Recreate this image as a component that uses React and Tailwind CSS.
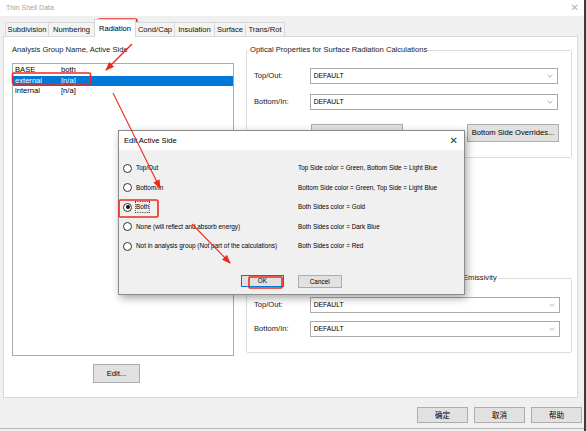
const reg = "font-['Liberation_Sans',Arial,sans-serif] text-[7.6px] leading-[10px]";
const narrow = "font-['Liberation_Sans',Arial,sans-serif] text-[7.5px] leading-[10px]";
const cjk = "font-['Noto_Sans_CJK_SC','Noto_Sans_CJK_JP',sans-serif] text-[7.5px] leading-[10px]";

const tabs = [
    { label: "Subdivision", w: "w-[44px]" },
    { label: "Numbering", w: "w-[47px]" },
    { label: "Radiation", w: "w-[42px]", active: true },
    { label: "Cond/Cap", w: "w-[40px]" },
    { label: "Insulation", w: "w-[41px]" },
    { label: "Surface", w: "w-[32px]" },
    { label: "Trans/Rot", w: "w-[40px]" },
];

const groups = [
    { name: "BASE", side: "both" },
    { name: "external", side: "[n/a]", selected: true },
    { name: "internal", side: "[n/a]" },
];

const options = [
    { label: "Top/Out", note: "Top Side color = Green, Bottom Side = Light Blue" },
    { label: "Bottom/In", note: "Bottom Side color = Green, Top Side = Light Blue" },
    { label: "Both", note: "Both Sides color = Gold", checked: true },
    { label: "None (will reflect and absorb energy)", note: "Both Sides color = Dark Blue" },
    { label: "Not in analysis group (Not part of the calculations)", note: "Both Sides color = Red" },
];

// dialog text is a squeezed system font, so scale it horizontally
function Narrow({ children, className = "", origin = "origin-left" }) {
    return (
        <span className={`inline-block whitespace-nowrap scale-x-[0.85] ${origin} ${narrow} ${className}`}>
            {children}
        </span>
    );
}

function Chevron() {
    return (
        <svg width="6" height="4" viewBox="0 0 6 4" className="mr-[4px]">
            <path d="M0.5 0.8 L3 3.2 L5.5 0.8" fill="none" stroke="#9a9a9a" strokeWidth="0.8" />
        </svg>
    );
}

function Combo({ label, width, mt }) {
    return (
        <div className={`flex items-center ${mt}`}>
            <span className={`${reg} w-[56px] text-[#1a1a1a]`}>{label}</span>
            <div className={`${width} h-[16px] bg-white border border-[#a9a9a9] flex items-center justify-between`}>
                <span className={`${narrow} pl-[3px] inline-block scale-x-[0.9] origin-left text-black`}>DEFAULT</span>
                <Chevron />
            </div>
        </div>
    );
}

function Radio({ checked }) {
    return (
        <span className="w-[9px] h-[9px] rounded-full border border-[#333] bg-white flex items-center justify-center shrink-0">
            {checked && <span className="w-[4px] h-[4px] rounded-full bg-[#111]" />}
        </span>
    );
}

export default function App() {
    return (
        <div className="w-[586px] h-[431px] flex bg-[#f0f0f0] relative overflow-hidden">
            <div className="w-[584px] h-[429px] flex flex-col border-b border-[#b5b5b5]">
                {/* title bar */}
                <div className="h-[16px] bg-white flex items-center justify-between px-[6px]">
                    <span className={`${reg} text-[7px] text-[#a3a3a3]`}>Thin Shell Data</span>
                    <span className="text-[10px] leading-none text-[#b0b0b0] font-['DejaVu_Sans',sans-serif] -mr-[1px]">✕</span>
                </div>

                {/* tabs */}
                <div className="mt-[3px] h-[17px] flex items-end pl-[5px] relative z-10">
                    {tabs.map(t => (
                        <div
                            key={t.label}
                            className={`${t.w} ${reg} flex items-center justify-center border border-b-0 -ml-px first:ml-0 ${t.active ? "h-[18px] -mb-px bg-white border-[#d4d4d4] text-black" : "h-[14px] bg-[#f3f3f3] border-[#d9d9d9] text-[#111]"}`}
                        >
                            {t.label}
                        </div>
                    ))}
                </div>

                {/* tab page */}
                <div className="mx-[3px] w-[575px] h-[362px] bg-white border border-[#d9d9d9] flex pt-[8px] pl-[8px]">
                    <div className="w-[222px] flex flex-col">
                        <div className={`${reg} text-[#1a1a1a]`}>Analysis Group Name, Active Side</div>
                        <div className="mt-[8px] h-[293px] border border-[#aaaaaa] bg-white pt-[1px]">
                            {groups.map(g => (
                                <div
                                    key={g.name}
                                    className={`h-[10.5px] flex items-center ${reg} ${g.selected ? "bg-[#0078d7] text-white" : "text-black"}`}
                                >
                                    <span className="w-[48px] pl-[2px]">{g.name}</span>
                                    <span>{g.side}</span>
                                </div>
                            ))}
                        </div>
                        <button className={`mt-[8px] ml-[81px] w-[47px] h-[19px] bg-[#e1e1e1] border border-[#adadad] ${reg} text-black`}>
                            Edit...
                        </button>
                    </div>

                    <div className="ml-[12px] w-[326px] flex flex-col">
                        <fieldset className="border border-[#dcdcdc] rounded-[2px] px-0 pb-[15px] m-0">
                            <legend className={`${reg} ml-[2px] px-[1px] text-[#1a1a1a]`}>
                                Optical Properties for Surface Radiation Calculations
                            </legend>
                            <div className="pl-[7px]">
                                <Combo label="Top/Out:" width="w-[248px]" mt="mt-[13px]" />
                                <Combo label="Bottom/In:" width="w-[248px]" mt="mt-[10px]" />
                                <div className="mt-[14px] ml-[57px] flex gap-[64px]">
                                    <button className={`w-[92px] h-[18px] bg-[#e1e1e1] border border-[#adadad] ${reg} text-black`}>
                                        Top Side Overrides...
                                    </button>
                                    <button className={`w-[92px] h-[18px] bg-[#e1e1e1] border border-[#adadad] ${reg} text-black`}>
                                        Bottom Side Overrides...
                                    </button>
                                </div>
                            </div>
                        </fieldset>

                        {/* legend start is hidden behind the modal */}
                        <fieldset className="mt-[115px] border border-[#dcdcdc] rounded-[2px] px-0 pb-[15px] m-0">
                            <legend className={`${reg} ml-[215px] px-[1px] text-[#1a1a1a]`}>
                                Emissivity
                            </legend>
                            <div className="pl-[7px]">
                                <Combo label="Top/Out:" width="w-[250px]" mt="mt-[14px]" />
                                <Combo label="Bottom/In:" width="w-[250px]" mt="mt-[8px]" />
                            </div>
                        </fieldset>
                    </div>
                </div>

                {/* dialog buttons */}
                <div className="mt-[9px] flex justify-end gap-[6px] pr-[2px]">
                    {["确定", "取消", "帮助"].map(b => (
                        <button key={b} className={`w-[51px] h-[16px] bg-[#e1e1e1] border border-[#adadad] ${cjk} text-black`}>
                            {b}
                        </button>
                    ))}
                </div>
            </div>
            <div className="w-[2px] h-full bg-[#3c3c3c]" />

            {/* Edit Active Side modal */}
            <div className="absolute left-[118px] top-[130px] w-[347px] h-[165px] border border-[#8c8c8c] bg-[#f0f0f0] shadow-[2px_3px_8px_rgba(0,0,0,0.35)] flex flex-col">
                <div className="h-[19px] bg-white flex items-center justify-between pl-[5px] pr-[6px]">
                    <span className={`${reg} text-black`}>Edit Active Side</span>
                    <span className="text-[10px] leading-none text-[#333] font-['DejaVu_Sans',sans-serif]">✕</span>
                </div>
                <div className="pt-[12px] pl-[4px] flex flex-col gap-[7.5px]">
                    {options.map(o => (
                        <div key={o.label} className="h-[12px] flex items-center">
                            <div className="w-[175px] flex items-center gap-[4px]">
                                <Radio checked={o.checked} />
                                <Narrow className={`text-black ${o.checked ? "outline outline-1 outline-dotted outline-[#444]" : ""}`}>
                                    {o.label}
                                </Narrow>
                            </div>
                            <Narrow className="text-black">{o.note}</Narrow>
                        </div>
                    ))}
                </div>
                <div className="mt-auto mb-[6px] ml-[122px] flex gap-[14px]">
                    <button className="w-[43px] h-[12px] bg-[#e1e1e1] border border-[#0078d7] flex items-center justify-center">
                        <Narrow origin="origin-center" className="text-black">OK</Narrow>
                    </button>
                    <button className="w-[44px] h-[13px] bg-[#e1e1e1] border border-[#adadad] flex items-center justify-center">
                        <Narrow origin="origin-center" className="text-black">Cancel</Narrow>
                    </button>
                </div>
            </div>

            {/* annotations */}
            <svg className="absolute left-0 top-0 pointer-events-none" width="586" height="431" viewBox="0 0 586 431">
                <defs>
                    <marker id="head" markerWidth="9" markerHeight="7" refX="8" refY="3.5" orient="auto" markerUnits="userSpaceOnUse">
                        <path d="M0 0 L9 3.5 L0 7 Z" fill="#ec2b1e" />
                    </marker>
                </defs>
                <rect x="98" y="19" width="39" height="16" rx="1.5" fill="none" stroke="#ec2b1e" strokeWidth="1.6" />
                <rect x="12.5" y="73" width="78" height="11" rx="1.5" fill="none" stroke="#ec2b1e" strokeWidth="1.6" />
                <rect x="119" y="200" width="39" height="17" rx="1.5" fill="none" stroke="#ec2b1e" strokeWidth="1.6" />
                <rect x="249" y="277" width="33" height="11" rx="1" fill="none" stroke="#ec2b1e" strokeWidth="1.6" />
                <line x1="132" y1="44" x2="106" y2="70" stroke="#ec2b1e" strokeWidth="1.4" markerEnd="url(#head)" />
                <line x1="113" y1="93" x2="160" y2="188" stroke="#ec2b1e" strokeWidth="1.1" markerEnd="url(#head)" />
                <line x1="192" y1="224" x2="230" y2="263" stroke="#ec2b1e" strokeWidth="1.1" markerEnd="url(#head)" />
            </svg>
        </div>
    );
}
